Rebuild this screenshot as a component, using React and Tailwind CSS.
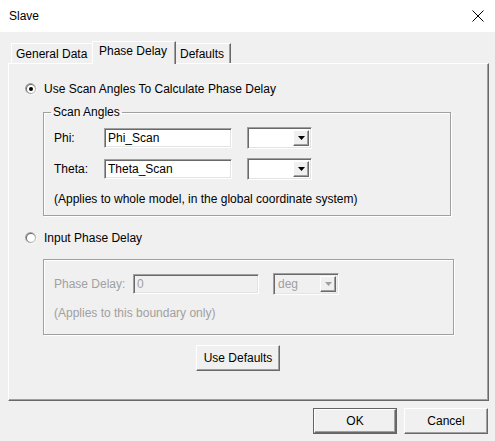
import React from 'react'

const raised =
  'border border-t-white border-l-white border-r-[#696969] border-b-[#696969] shadow-[inset_-1px_-1px_0_#a0a0a0]'
const sunken =
  'border border-t-[#a0a0a0] border-l-[#a0a0a0] border-r-white border-b-white shadow-[inset_1px_1px_0_#696969,inset_-1px_-1px_0_#e3e3e3]'
const etched = 'border border-[#a0a0a0] shadow-[inset_1px_1px_0_#fff,1px_1px_0_#fff]'

function Radio({ checked }) {
  return (
    <svg width="12" height="12" viewBox="0 0 12 12" className="shrink-0">
      <circle cx="6" cy="6" r="6" fill="#fff" />
      <circle cx="5.6" cy="5.6" r="5.6" fill="#a0a0a0" />
      <circle cx="6" cy="6" r="5" fill="#e3e3e3" />
      <circle cx="5.7" cy="5.7" r="4.7" fill="#696969" />
      <circle cx="6" cy="6" r="4" fill="#fff" />
      {checked && <circle cx="6" cy="6" r="2" fill="#000" />}
    </svg>
  )
}

function Arrow({ disabled }) {
  return (
    <svg width="7" height="4" viewBox="0 0 7 4">
      <path d="M0 0H7L3.5 4Z" fill={disabled ? '#a0a0a0' : '#000'} />
    </svg>
  )
}

function Combo({ value, disabled, w }) {
  return (
    <div
      className={`${sunken} ${w} h-[22px] flex items-stretch p-[2px] ${
        disabled ? 'bg-[#f0f0f0] text-[#a0a0a0]' : 'bg-white'
      }`}
    >
      <div className="flex-1 pl-[2px] flex items-center">{value}</div>
      <div className={`${raised} bg-[#f0f0f0] w-[16px] flex items-center justify-center`}>
        <Arrow disabled={disabled} />
      </div>
    </div>
  )
}

function Field({ value, disabled, w }) {
  return (
    <div
      className={`${sunken} ${w} h-[20px] flex items-center px-[3px] ${
        disabled ? 'bg-[#f0f0f0] text-[#a0a0a0]' : 'bg-white'
      }`}
    >
      {value}
    </div>
  )
}

function Button({ children, def, className = '' }) {
  if (def) {
    return (
      <div className={`border border-[#646464] ${className}`}>
        <div className={`${raised} bg-[#f0f0f0] h-full flex items-center justify-center`}>{children}</div>
      </div>
    )
  }
  return (
    <div className={`${raised} bg-[#f0f0f0] flex items-center justify-center ${className}`}>{children}</div>
  )
}

export default function App() {
  return (
    <div
      className="w-[495px] h-[441px] bg-[#f0f0f0] flex flex-col text-[12px] leading-[14px] text-black overflow-hidden"
      style={{ fontFamily: '"Liberation Sans", Arial, sans-serif' }}
    >
      <div className="h-[32px] bg-white flex items-center justify-between pl-[9px] pr-[11px] shrink-0">
        <span className="text-[12px]">Slave</span>
        <svg width="12" height="12" viewBox="0 0 12 12">
          <path d="M0.5 0.5L11.5 11.5M11.5 0.5L0.5 11.5" stroke="#000" strokeWidth="1" />
        </svg>
      </div>

      <div className="flex items-end pl-[11px] mt-[9px] h-[22px] relative z-10">
        <div className="w-[81px] h-[20px] border-t border-l border-t-white border-l-white flex items-center pl-[4px]">
          General Data
        </div>
        <div className="w-[84px] h-[23px] -mb-px bg-[#f0f0f0] border-t border-l border-r border-t-white border-l-white border-r-[#696969] shadow-[inset_-1px_0_0_#a0a0a0] flex items-start pt-[2px] pl-[6px]">
          Phase Delay
        </div>
        <div className="w-[55px] h-[20px] border-t border-r border-t-white border-r-[#696969] shadow-[inset_-1px_0_0_#a0a0a0] flex items-center pl-[4px]">
          Defaults
        </div>
      </div>

      <div className="ml-[8px] w-[481px] h-[338px] border border-t-white border-l-white border-r-[#696969] border-b-[#696969] shadow-[inset_-1px_-1px_0_#a0a0a0] pt-[17px] flex flex-col items-start">
        <div className="flex items-center gap-[7px] pl-[16px] h-[16px]">
          <Radio checked />
          <span>Use Scan Angles To Calculate Phase Delay</span>
        </div>

        <fieldset className={`${etched} ml-[34px] mt-[8px] w-[408px] px-0 pt-0 pb-[9px] m-0`}>
          <legend className="ml-[7px] px-[2px] leading-[14px]">Scan Angles</legend>
          <div className="flex items-center pl-[10px] mt-[8px] h-[22px]">
            <span className="w-[50px]">Phi:</span>
            <Field value="Phi_Scan" w="w-[128px]" />
            <div className="ml-[15px]">
              <Combo w="w-[65px]" />
            </div>
          </div>
          <div className="flex items-center pl-[10px] mt-[9px] h-[22px]">
            <span className="w-[50px]">Theta:</span>
            <Field value="Theta_Scan" w="w-[128px]" />
            <div className="ml-[15px]">
              <Combo w="w-[65px]" />
            </div>
          </div>
          <div className="pl-[10px] mt-[12px]">(Applies to whole model, in the global coordinate system)</div>
        </fieldset>

        <div className="flex items-center gap-[7px] pl-[16px] h-[16px] mt-[14px]">
          <Radio />
          <span>Input Phase Delay</span>
        </div>

        <div className={`${etched} ml-[34px] mt-[13px] w-[411px] pt-[13px] pb-[14px] text-[#a0a0a0]`}>
          <div className="flex items-center pl-[10px] h-[22px]">
            <span className="w-[79px]">Phase Delay:</span>
            <Field value="0" disabled w="w-[126px]" />
            <div className="ml-[14px]">
              <Combo value="deg" disabled w="w-[66px]" />
            </div>
          </div>
          <div className="pl-[10px] mt-[11px]">(Applies to this boundary only)</div>
        </div>

        <Button className="ml-[187px] mt-[10px] w-[84px] h-[26px]">Use Defaults</Button>
      </div>

      <div className="flex justify-end gap-[7px] pr-[7px] mt-[7px]">
        <Button def className="w-[84px] h-[26px]">OK</Button>
        <Button className="w-[84px] h-[26px]">Cancel</Button>
      </div>
    </div>
  )
}
